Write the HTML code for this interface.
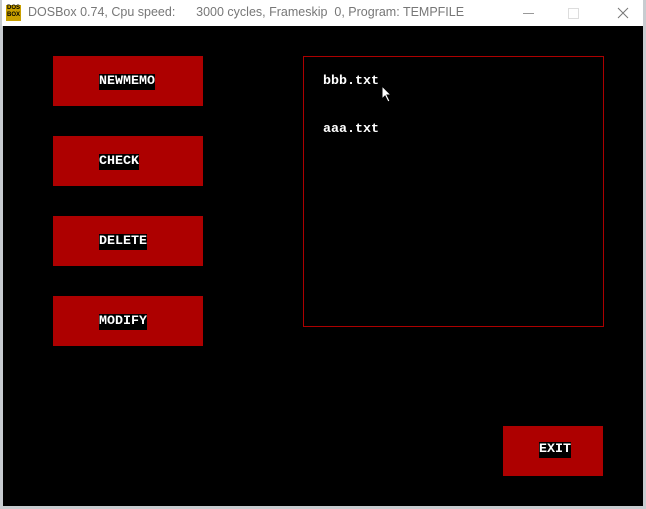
<!DOCTYPE html>
<html><head><style>
body{margin:0;width:646px;height:509px;overflow:hidden;background:#c8ccd0;position:relative;font-family:"Liberation Mono",monospace}
.tb{position:absolute;left:2px;top:0;width:641px;height:26px;background:#fff;font-family:"Liberation Sans",sans-serif;font-size:12.5px;color:#777}
.scr{position:absolute;left:3px;top:26px;width:640px;height:480px;background:#000}
.btn{position:absolute;left:53px;width:150px;height:50px;background:#ad0000}
.lbl{position:absolute;background:#000;color:#fff;font-weight:bold;font-size:13.33px;line-height:16px;height:16px;letter-spacing:0}
.f{position:absolute;color:#fff;font-weight:bold;font-size:13.33px;line-height:16px}
</style></head><body>
<div class="tb">
<div style="position:absolute;left:4px;top:5px;width:15px;height:16px;background:#c9a000;font:bold 6px 'Liberation Sans';color:#000;line-height:7px;text-align:center">DOS<br>BOX</div>
<div style="position:absolute;left:26px;top:5px;white-space:pre">DOSBox 0.74, Cpu speed:      3000 cycles, Frameskip  0, Program: TEMPFILE</div>
<div style="position:absolute;left:521px;top:13px;width:11px;height:1px;background:#999"></div>
<div style="position:absolute;left:566px;top:8px;width:9px;height:9px;border:1px solid #ddd"></div>
<svg style="position:absolute;left:615px;top:7px" width="12" height="12"><path d="M1 1L11 11M11 1L1 11" stroke="#777" stroke-width="1"/></svg>
</div>
<div class="scr"></div>
<div class="btn" style="top:56px"></div><div class="lbl" style="left:99px;top:74px">NEWMEMO</div>
<div class="btn" style="top:136px"></div><div class="lbl" style="left:99px;top:154px">CHECK</div>
<div class="btn" style="top:216px"></div><div class="lbl" style="left:99px;top:234px">DELETE</div>
<div class="btn" style="top:296px"></div><div class="lbl" style="left:99px;top:314px">MODIFY</div>
<div class="btn" style="top:426px;left:503px;width:100px"></div><div class="lbl" style="left:539px;top:442px">EXIT</div>
<div style="position:absolute;left:303px;top:56px;width:299px;height:269px;border:1px solid #ad0000"></div>
<div class="f" style="left:323px;top:74px">bbb.txt</div>
<div class="f" style="left:323px;top:122px">aaa.txt</div>
<svg style="position:absolute;left:381px;top:85px" width="12" height="18"><path d="M1 1 L1 14 L4 11 L7 17 L9 16 L6 10 L10 10 Z" fill="#fff" stroke="#000" stroke-width="1"/></svg>
</body></html>
